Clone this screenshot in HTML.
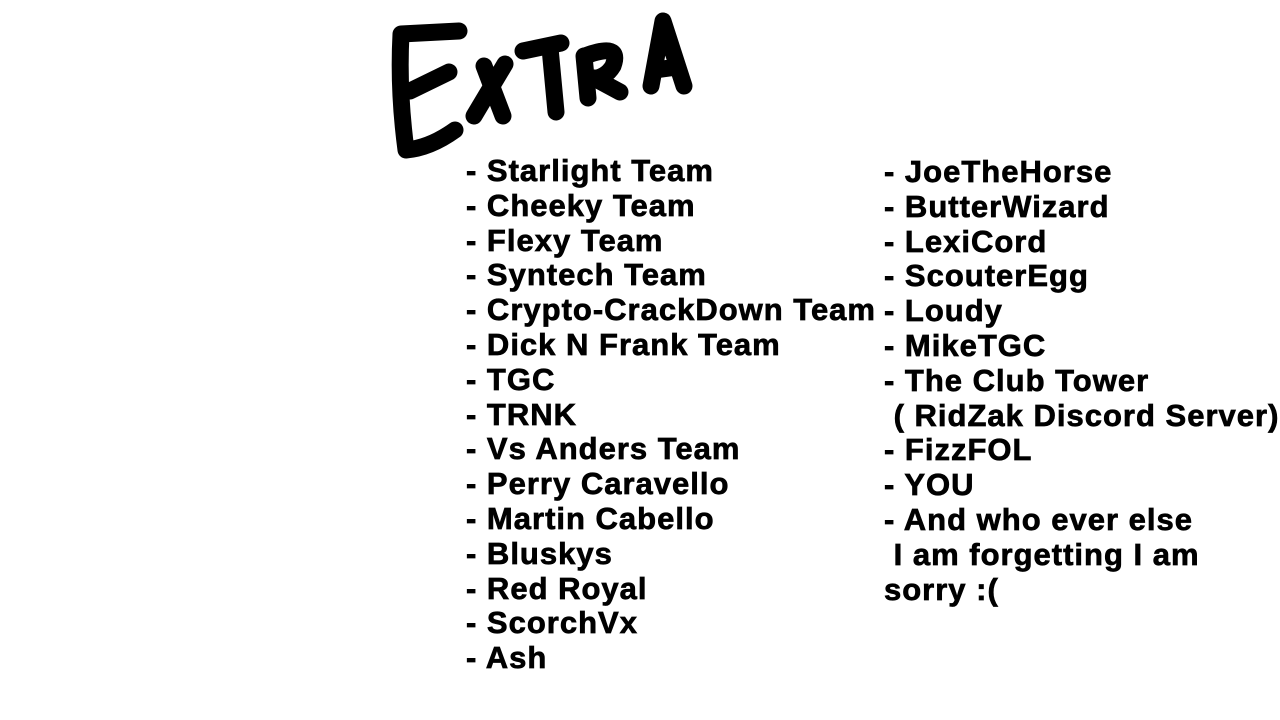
<!DOCTYPE html>
<html><head><meta charset="utf-8"><style>
html,body{margin:0;padding:0;background:#fff;width:1280px;height:720px;overflow:hidden;position:relative}
.col{position:absolute;font-family:"Liberation Sans",Arial,sans-serif;font-weight:bold;font-size:31px;line-height:34.8px;letter-spacing:1px;color:#000;white-space:pre;-webkit-text-stroke:0.7px #000}
svg{position:absolute;left:0;top:0}
</style></head><body>
<svg width="1280" height="200" viewBox="0 0 1280 200" fill="none" stroke="#000" stroke-width="17" stroke-linecap="round" stroke-linejoin="round">
<path d="M459 31 L401 34 Q398 90 406 150 Q430 148 455 130"/>
<path d="M410 91 L449 72"/>
<path d="M484 66 L503 116"/>
<path d="M505 64 L474 116"/>
<path d="M523 51 L561 43"/>
<path d="M550 48 L556 112"/>
<path d="M584 56 L588 98"/>
<path d="M585 56 Q622 42 613 66 Q606 78 591 79"/>
<path d="M594 78 L620 92"/>
<path d="M651 86 L663 21 L684 86"/>
<path d="M655 70 L677 67"/>
</svg>
<div class="col" style="left:466px;top:154px">- Starlight Team
- Cheeky Team
- Flexy Team
- Syntech Team
- Crypto-CrackDown Team
- Dick N Frank Team
- TGC
- TRNK
- Vs Anders Team
- Perry Caravello
- Martin Cabello
- Bluskys
- Red Royal
- ScorchVx
- Ash</div>
<div class="col" style="left:884px;top:155px">- JoeTheHorse
- ButterWizard
- LexiCord
- ScouterEgg
- Loudy
- MikeTGC
- The Club Tower
 ( RidZak Discord Server)
- FizzFOL
- YOU
- And who ever else
 I am forgetting I am
sorry :(</div>
</body></html>
